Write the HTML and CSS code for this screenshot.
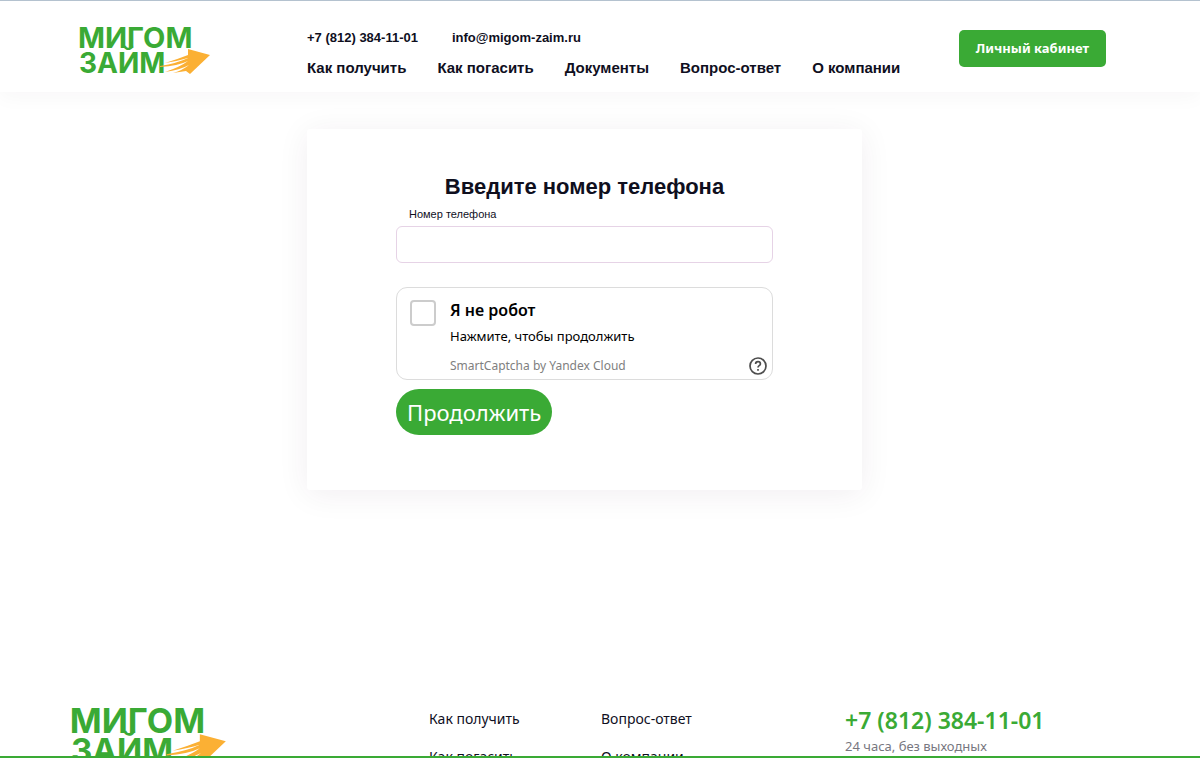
FILE: index.html
```html
<!DOCTYPE html>
<html lang="ru">
<head>
<meta charset="utf-8">
<meta name="viewport" content="width=device-width, initial-scale=1">
<title>Мигом Займ</title>
<link rel="stylesheet" href="styles.css">
</head>
<body>
<header class="header">
  <div class="header-inner">
    <a class="logo" href="#" aria-label="Мигом Займ">
      <svg viewBox="0 0 132 48">
        <text class="logo-top" x="-1" y="21">МИГОМ</text>
        <text class="logo-low" x="0" y="46">ЗАЙМ</text>
        <path class="logo-arrow" d="M109 22 131 28 111 47 107 44 94 46Q104 43 110 38Q101 43 86 45Q101 40 109 34Q99 39 81 40V39Q99 36 109 31Q99 34 86 36Q99 32 109 28Z"/>
      </svg>
    </a>
    <div class="header-center">
      <div class="contacts">
        <a href="tel:+78123841101">+7 (812) 384-11-01</a>
        <a href="mailto:info@migom-zaim.ru">info@migom-zaim.ru</a>
      </div>
      <nav class="nav">
        <a href="#">Как получить</a>
        <a href="#">Как погасить</a>
        <a href="#">Документы</a>
        <a href="#">Вопрос-ответ</a>
        <a href="#">О компании</a>
      </nav>
    </div>
    <a class="account" href="#">Личный кабинет</a>
  </div>
</header>
<main class="main">
  <form class="card">
    <h1>Введите номер телефона</h1>
    <label class="phone-label" for="phone">Номер телефона</label>
    <input class="phone" id="phone" type="tel">
    <div class="captcha">
      <input class="check" id="robot" type="checkbox">
      <div class="captcha-text">
        <label class="captcha-title" for="robot">Я не робот</label>
        <span class="captcha-hint">Нажмите, чтобы продолжить</span>
        <a class="captcha-brand" href="#">SmartCaptcha by Yandex Cloud</a>
      </div>
      <button class="help" type="button" aria-label="Справка">
        <svg viewBox="0 0 20 20"><circle cx="10" cy="10" r="8"/><path d="M7.6 8.1C7.6 6.6 8.6 5.7 10 5.7s2.4.9 2.4 2.2c0 1.7-2.4 1.8-2.4 3.5"/><path d="M10 13v1.8"/></svg>
      </button>
    </div>
    <button class="submit" type="submit">Продолжить</button>
  </form>
</main>
<footer class="footer">
  <a class="footer-logo" href="#" aria-label="Мигом Займ">
    <svg viewBox="0 0 132 48">
      <text class="logo-top" x="-1" y="21">МИГОМ</text>
      <text class="logo-low" x="0" y="46">ЗАЙМ</text>
      <path class="logo-arrow" d="M109 22 131 28 111 47 107 44 94 46Q104 43 110 38Q101 43 86 45Q101 40 109 34Q99 39 81 40V39Q99 36 109 31Q99 34 86 36Q99 32 109 28Z"/>
    </svg>
  </a>
  <nav class="footer-links">
    <a href="#">Как получить</a>
    <a href="#">Как погасить</a>
  </nav>
  <nav class="footer-links">
    <a href="#">Вопрос-ответ</a>
    <a href="#">О компании</a>
  </nav>
  <div class="footer-contact">
    <a href="tel:+78123841101">+7 (812) 384-11-01</a>
    <p>24 часа, без выходных</p>
  </div>
</footer>
<div class="bottom-line"></div>
</body>
</html>
```
FILE: styles.css
```css
* { box-sizing: border-box; }

body {
  margin: 0;
  height: 100vh;
  overflow: hidden;
  background: #fff;
  color: #0f0f1e;
  font-family: "Liberation Sans", Arial, sans-serif;
}

a { color: inherit; text-decoration: none; }
svg { display: block; overflow: visible; }
.logo-top { fill: #3aaa35; font: 700 29px Inter, sans-serif; }
.logo-low { fill: #3aaa35; font: 700 28px Inter, sans-serif; }
.logo-arrow { fill: #fbb034; }

.header {
  padding: 0 94px 0 79px;
  border-top: 1px solid #b4c2cf;
  background: #fff;
  box-shadow: 0 4px 20px rgba(60, 10, 60, 0.04);
}
.header-inner {
  display: grid;
  grid-template-columns: 228px 1fr auto;
  align-items: center;
  height: 91px;
}
.logo { padding-top: 9px; }
.logo svg { width: 132px; height: 48px; }
.header-center { display: flex; flex-direction: column; gap: 10px; padding-top: 12px; }
.contacts { display: flex; gap: 34px; font-size: 13px; font-weight: 700; line-height: 20px; }
.nav { display: flex; gap: 31px; font-size: 15px; font-weight: 700; line-height: 20px; white-space: nowrap; }
.account {
  padding: 0 17px;
  border-radius: 5px;
  background: #3aaa35;
  color: #fff;
  font: 700 13px/37px "Noto Sans", sans-serif;
  margin-top: 4px;
}

.main { display: flex; justify-content: center; padding: 37px 31px 0 0; }
.card {
  display: flex;
  flex-direction: column;
  width: 555px;
  padding: 43px 89px 55px;
  border-radius: 3px;
  background: #fff;
  box-shadow: 0 4px 32px rgba(60, 10, 60, 0.07);
}
h1 { margin: 0; text-align: center; font-size: 22px; line-height: 30px; white-space: nowrap; }
.phone-label { padding: 4px 13px; font-size: 11px; line-height: 16px; }
.phone {
  height: 37px;
  padding: 0 12px;
  border: 1px solid #e6d3e6;
  border-radius: 6px;
  background: #fff;
  font-size: 16px;
}
.captcha {
  display: flex;
  gap: 14px;
  margin: 24px 0 9px;
  padding: 12px 4px 3px 13px;
  border: 1px solid #dcdcdc;
  border-radius: 11px;
  font-family: "Noto Sans", sans-serif;
}
.check {
  appearance: none;
  width: 26px;
  height: 26px;
  margin: 0;
  border: 2px solid #ccc;
  border-radius: 4px;
}
.captcha-text { display: flex; flex: 1; flex-direction: column; color: #000; }
.captcha-title { font-size: 16px; font-weight: 600; line-height: 20px; }
.captcha-hint { padding-top: 5px; font-size: 13px; line-height: 22px; }
.captcha-brand { padding-top: 9px; color: #808080; font-size: 12px; line-height: 20px; }
.help { align-self: flex-end; width: 20px; height: 20px; padding: 0; border: 0; background: none; }
.help svg { fill: none; stroke: #4d4d4d; stroke-width: 1.7; }
.submit {
  align-self: flex-start;
  padding: 0 11px;
  border: 0;
  border-radius: 23px;
  background: #3aaa35;
  color: #fff;
  font: 400 22px/46px "Noto Sans", sans-serif;
}

.footer {
  display: grid;
  grid-template-columns: 358fr 172fr 244fr 340fr;
  padding: 216px 15px 0 71px;
  font-family: "Noto Sans", sans-serif;
}
.footer-logo { padding-top: 2px; }
.footer-logo svg { width: 156px; height: 57px; }
.footer-links { display: flex; flex-direction: column; gap: 18px; padding-top: 3px; font-size: 14px; line-height: 20px; }
.footer-contact a { color: #3aaa35; font-size: 23px; font-weight: 600; line-height: 28px; }
.footer-contact p { margin: 3px 0 0; color: #77777f; font-size: 13px; line-height: 18px; }

.bottom-line { position: fixed; right: 0; bottom: 0; left: 0; height: 2px; background: #3aaa35; }
```
